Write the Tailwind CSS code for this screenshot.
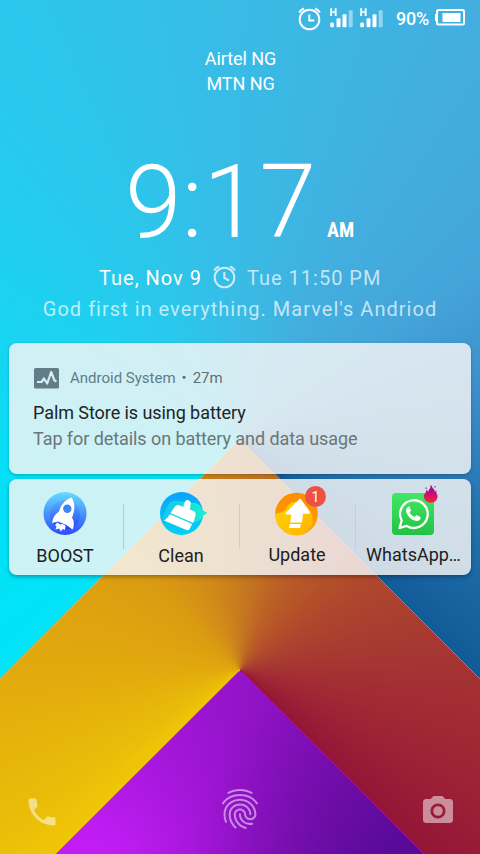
<!DOCTYPE html>
<html lang="en">
<head>
<meta charset="utf-8">
<title>Lock screen</title>
<script src="https://cdn.jsdelivr.net/npm/@tailwindcss/browser@4"></script>
</head>
<body class="w-[480px] h-[854px] overflow-hidden font-['Roboto',sans-serif]">
<div class="relative isolate w-[480px] h-[854px] overflow-hidden">
  <!-- wallpaper -->
  <div class="absolute inset-0 -z-10 bg-[conic-gradient(from_225deg_at_240px_438px,#00e4f8_0deg,#04e0f6_35deg,#1cd2f0_75deg,#2cc6eb_108deg,#39bbe6_135deg,#42aedf_165deg,#44a4da_190deg,#3b8cc8_215deg,#2676b2_240deg,#115b98_270deg,#115b98_315deg,#00e4f8_315deg)]"></div>
  <div class="absolute inset-0 -z-10 [clip-path:polygon(240px_439px,480px_679px,480px_854px,0_854px,0_679px)] bg-[conic-gradient(from_225deg_at_240px_670px,#f0c607_0deg,#e9bc09_12deg,#e2a90d_45deg,#da9b12_90deg,#cf8819_118deg,#c57820_138deg,#bb5f26_160deg,#af482d_190deg,#a63632_220deg,#9d2335_250deg,#941537_270deg,#941537_315deg,#f0c607_315deg)]"></div>
  <svg class="absolute inset-0 -z-10" width="480" height="854" viewBox="0 0 480 854" fill="none">
    <defs>
      <radialGradient id="glow" gradientUnits="userSpaceOnUse" cx="85" cy="865" r="215"><stop stop-color="#c41df7"/><stop offset=".2" stop-color="#c01df3" stop-opacity=".9"/><stop offset="1" stop-color="#9a14d2" stop-opacity="0"/></radialGradient>
      <radialGradient id="shade" gradientUnits="userSpaceOnUse" cx="420" cy="865" r="230"><stop stop-color="#540a94"/><stop offset=".2" stop-color="#580a98" stop-opacity=".88"/><stop offset="1" stop-color="#7a0eb0" stop-opacity="0"/></radialGradient>
      <linearGradient id="violet" gradientUnits="userSpaceOnUse" x1="140" y1="800" x2="340" y2="830"><stop stop-color="#a316d9"/><stop offset=".5" stop-color="#9113c6"/><stop offset="1" stop-color="#780eae"/></linearGradient>
    </defs>
    <path d="M0 679L240 439" stroke="#e9b860" stroke-opacity=".7"/>
    <path d="M240 439L480 679" stroke="#9e9c93" stroke-opacity=".7"/>
    <path id="peak" d="M56 854L238 672Q240 670 242 672L424 854Z" fill="url(#violet)"/>
    <path d="M56 854L238 672Q240 670 242 672L424 854Z" fill="url(#glow)"/>
    <path d="M56 854L238 672Q240 670 242 672L424 854Z" fill="url(#shade)"/>
    <path d="M242 672L424 854" stroke="#a4149c"/>
  </svg>

  <div class="flex h-full flex-col">
    <!-- status bar -->
    <div class="flex h-[38px] items-start text-white pt-[6px] pl-[297px]">
      <svg width="25" height="25" viewBox="0 0 25 25" fill="none" stroke="#fff" stroke-width="2"><circle cx="12.500" cy="13.500" r="9.800"/><path d="M12.300 8.500V14.500H17.300M2 6.500Q4 3.500 7 2.500M23 6.500Q21 3.500 18 2.500"/></svg>
      <svg class="ml-[8px]" width="54" height="24" viewBox="0 0 54 24" fill="#fff">
        <g id="sim"><path d="M.2 2.300H2.100V5.200H4.700V2.300H6.600V10H4.700V6.800H2.100V10H.2Z"/><rect x=".2" y="16.500" width="3.800" height="4.700" rx="1.200"/><rect x="6.500" y="12.300" width="4" height="9" rx="1"/><rect x="12.500" y="8.200" width="4" height="13" rx="1"/><rect x="18.700" y="4.200" width="4" height="17" rx="1" fill-opacity=".45"/></g>
        <use href="#sim" x="30"/>
      </svg>
      <span class="ml-[12px] w-[39px] text-[18px] leading-[26px] font-medium tracking-[-0.2px] whitespace-nowrap">90%</span>
      <svg width="30" height="20" viewBox="0 0 30 20"><path d="M3.500 4H27.500Q29 4 29 5.500V17Q29 18.500 27.500 18.500H3.500Q2 18.500 2 17V5.500Q2 4 3.500 4Z" fill="none" stroke="#fff" stroke-width="2"/><path d="M0 8H2V15H0ZM7.500 7H25.500V16H7.500Z" fill="#fff"/></svg>
    </div>

    <div class="pt-[8px] pl-px text-center text-[18px] leading-[25px] tracking-[-0.06px] text-white"><div>Airtel NG</div><div>MTN NG</div></div>

    <!-- clock -->
    <div class="mt-[45px] flex h-[122px] items-baseline pl-[125px] text-white">
      <span class="w-[202px] whitespace-nowrap text-[102px] leading-[122px] font-light">9:17</span>
      <span class="text-[20px] font-bold font-['Roboto_Condensed','Roboto',sans-serif]">AM</span>
    </div>
    <div class="flex h-[30px] items-center pl-[99px] text-[20px] tracking-[1px] whitespace-nowrap text-white">
      <span class="w-[113px]">Tue, Nov 9</span>
      <svg class="w-[25px] h-[25px] -mt-[3px] opacity-75" viewBox="0 0 25 25" fill="none" stroke="#fff" stroke-width="2"><circle cx="12.500" cy="13.500" r="9.800"/><path d="M12.300 8V14L17 16.500M2 6.500Q4 3.500 7 2.500M23 6.500Q21 3.500 18 2.500"/></svg>
      <span class="ml-[10px] text-white/70">Tue 11:50 PM</span>
    </div>
    <div class="h-[31px] pt-px text-center text-[20px] leading-[31px] tracking-[1.020px] whitespace-nowrap text-white/70">God first in everything. Marvel's Andriod</div>

    <!-- notification -->
    <div class="mx-[9px] mt-[19px] h-[131px] rounded-[8px] bg-[#f5f5f5]/83 px-[24px] pt-[22px] shadow-[0_1px_3px_rgba(0,0,0,0.25)]">
      <div class="flex h-[26px] items-center text-[15px] whitespace-nowrap text-[#607d86]">
        <svg class="mr-[11px]" width="26" height="21" viewBox="0 0 26 21"><rect x="1" y="0" width="25" height="20.500" rx="1.500" fill="#607d88"/><path d="M4 14H8.500L11 10.500L14.200 15.500L18.200 4L21.500 12.500L23.500 13.500" fill="none" stroke="#d6eef2" stroke-width="2.200" stroke-linejoin="round"/></svg>
        <span>Android System</span><span class="mx-[6px] text-[#5e6e72]">•</span><span class="text-[#5e6e72]">27m</span>
      </div>
      <div class="mt-[9px] text-[18px] leading-[26px] tracking-[-0.070px] text-[#1d2426]">Palm Store is using battery</div>
      <div class="text-[18px] leading-[26px] tracking-[-0.070px] text-[#6a7678]">Tap for details on battery and data usage</div>
    </div>

    <!-- shortcuts -->
    <div class="mx-[9px] mt-[5px] grid h-[96px] grid-cols-[115px_116px_116px_115px] rounded-[8px] bg-[#f5f5f5]/83 text-[18px] leading-[24px] text-[#1d2021] shadow-[0_2px_4px_rgba(0,0,0,0.3)]">
      <div class="relative flex flex-col items-center pt-[13px] pr-[3px]">
        <svg width="44" height="44" viewBox="0 0 44 44">
          <defs><linearGradient id="b1" x2="0" y2="1"><stop stop-color="#66dcff"/><stop offset="1" stop-color="#2a4cff"/></linearGradient><linearGradient id="b2" x2="0" y2="1"><stop stop-color="#58b4fb"/><stop offset="1" stop-color="#2340ff"/></linearGradient></defs>
          <circle cx="22" cy="21.500" r="21.500" fill="url(#b1)"/><circle cx="22" cy="23" r="15" fill="url(#b2)"/>
          <path d="M28.500 5.500C23 7.500 18 12 16 19.500C12 22 9.500 26 9 31L15 29.500L23.500 33L29.500 37.500Q32.500 31 29 25.500C32 19 32.500 11 28.500 5.500Z" fill="#fff"/>
          <circle cx="24.300" cy="16.800" r="4.200" fill="#3f82f5"/>
          <path d="M14.500 30.500L17 32.500L19.500 32L22.500 33.500L22 38L19.500 37L18 39.500L16 36.500L12.500 37.500L13.500 34.500L12 33Z" fill="#fff"/>
        </svg>
        <span class="mt-[8px]">BOOST</span><i class="absolute right-0 top-[25px] h-[45px] w-px bg-[#bcc9cc]"></i>
      </div>
      <div class="relative flex flex-col items-center pt-[13px] pr-[2px]">
        <svg class="overflow-visible" width="44" height="44" viewBox="0 0 44 44">
          <defs><linearGradient id="c1" x2="0" y2="1"><stop stop-color="#08a2ff"/><stop offset="1" stop-color="#04d2f3"/></linearGradient><linearGradient id="c2" x1="0" x2="1"><stop stop-color="#16c6ed"/><stop offset="1" stop-color="#19f2cf"/></linearGradient></defs>
          <circle cx="22.500" cy="21.500" r="21.500" fill="url(#c1)"/>
          <path d="M3 29Q4 23 9 13Q12 8 19 9L36 11Q42 12 43 18L48.500 21L43.500 24Q42 30 34 30Z" fill="url(#c2)"/>
          <path d="M26 9.500Q27.500 7.500 29.500 8.200Q32 9.500 31.700 11L31 17.500L35.500 19.500Q37.200 21 36.500 23.500L34.300 31L11.500 21L16 14.500Q17.500 12.300 20 13.200L24.200 15ZM11 22.300L33.300 32L30.500 37Q29.500 38.800 27.500 38L5 28.500Q9 26 11 22.300Z" fill="#fff"/>
        </svg>
        <span class="mt-[8px]">Clean</span><i class="absolute right-0 top-[25px] h-[45px] w-px bg-[#d2cbc6]"></i>
      </div>
      <div class="relative flex flex-col items-center pt-[13px] pr-[2px]">
        <div class="relative">
          <svg width="44" height="44" viewBox="0 0 44 44">
            <defs><linearGradient id="u1" x2="0" y2="1"><stop stop-color="#ff8b00"/><stop offset="1" stop-color="#ffa205"/></linearGradient><clipPath id="uc"><circle cx="21.500" cy="22" r="21.300"/></clipPath><linearGradient id="u2" x2="1" y2="1"><stop stop-color="#ffd600"/><stop offset="1" stop-color="#ffb300"/></linearGradient></defs>
            <circle cx="21.500" cy="22" r="21.300" fill="url(#u1)"/>
            <g clip-path="url(#uc)"><path d="M0 22Q11 21 13 13Q21 6 31 14Q40 22 37 33Q31 45 18 44Q1 40 0 22Z" fill="url(#u2)"/></g>
            <path d="M24.500 7Q25.500 6.300 26.200 7.500L34.800 19.800Q35.300 21.500 33.500 21.800H28L27 30.500H15.200L16.300 22.500H12Q10 22 11 20.500ZM14.800 32H26L25 36H14Z" fill="#fff"/>
          </svg>
          <span class="absolute left-[30px] -top-[6px] flex h-[21px] w-[21px] items-center justify-center rounded-full bg-[#ed5144] text-[14px] text-white">1</span>
        </div>
        <span class="mt-[7px]">Update</span><i class="absolute right-0 top-[25px] h-[45px] w-px bg-[#c6ccd4]"></i>
      </div>
      <div class="relative flex flex-col items-center pt-[13px]">
        <div class="relative mr-[2px]">
          <svg width="44" height="44" viewBox="0 0 44 44">
            <defs><linearGradient id="w1" x2="0" y2="1"><stop stop-color="#42e864"/><stop offset="1" stop-color="#22c244"/></linearGradient></defs>
            <rect x="1" y="1" width="42" height="42" rx="4" fill="url(#w1)"/>
            <path d="M8.500 36L10.700 28.500A13.800 13.800 0 1 1 15.800 33.900Z" fill="none" stroke="#fff" stroke-width="2.300" stroke-linejoin="round"/>
            <path d="M17.500 14.500Q15 16 15 19Q16 24 21 27.500Q26 30 28.500 28Q30 26.500 29.500 25L25.500 23L23.500 25Q20 23.500 18.500 20.500L20 18.500L18.500 14.500Z" fill="#fff"/>
          </svg>
          <svg class="absolute left-[32px] -top-[7px]" width="16" height="19" viewBox="0 0 16 19"><defs><linearGradient id="f1" x2="0" y2="1"><stop stop-color="#8a0c96"/><stop offset=".5" stop-color="#c41173"/><stop offset="1" stop-color="#ff2435"/></linearGradient></defs><path d="M7.500 0Q8 3 6 4.500Q5.500 5.500 5.500 6.500Q4 6 3.500 4.500Q3.500 6.500 2 8.500Q0 11 1.500 14A7 7 0 0 0 14.500 12.500Q15 10 13.500 8.500Q13 7 13.500 5.500Q12 6 11.500 7Q12 4 9.500 3Q9.500 1 7.500 0ZM2.500 2.500H3.800V3.800H2.500ZM11.500 1H12.500V2.500H11.500Z" fill="url(#f1)"/></svg>
        </div>
        <span class="mt-[7px] whitespace-nowrap">WhatsApp…</span>
      </div>
    </div>

    <!-- bottom actions -->
    <div class="mt-auto mb-[21px] flex items-center justify-between pl-[24px] pr-[24px] text-white/50">
      <svg class="mt-[6px]" width="36" height="36" viewBox="0 0 24 24" fill="currentColor"><path d="M6.620 10.790c1.440 2.830 3.760 5.140 6.590 6.590l2.200-2.200c.27-.27.67-.36 1.020-.24 1.120.37 2.330.57 3.570.57.55 0 1 .45 1 1V20c0 .55-.45 1-1 1-9.390 0-17-7.610-17-17 0-.55.45-1 1-1h3.500c.55 0 1 .45 1 1 0 1.250.2 2.450.57 3.570.11.35.03.74-.25 1.020l-2.200 2.200z"/></svg>
      <svg width="48" height="48" viewBox="0 0 24 24" fill="currentColor"><path d="M17.810 4.470c-.08 0-.16-.02-.23-.06C15.660 3.420 14 3 12.010 3c-1.980 0-3.860.47-5.570 1.410-.24.13-.54.04-.68-.2-.13-.24-.04-.55.2-.68C7.820 2.520 9.860 2 12.010 2c2.130 0 3.990.47 6.030 1.520.25.13.34.43.21.67-.09.18-.26.28-.44.28zM3.500 9.720c-.1 0-.2-.03-.29-.09-.23-.16-.28-.47-.12-.7.99-1.400 2.250-2.500 3.750-3.270C9.980 4.040 14 4.030 17.150 5.650c1.500.77 2.760 1.860 3.750 3.250.16.22.11.54-.12.7-.23.16-.54.11-.7-.12-.9-1.260-2.040-2.250-3.390-2.940-2.870-1.470-6.540-1.470-9.400.01-1.360.7-2.500 1.700-3.400 2.960-.08.14-.23.21-.39.21zm6.250 12.070c-.13 0-.26-.05-.35-.15-.87-.87-1.340-1.430-2.010-2.640-.69-1.230-1.050-2.730-1.050-4.340 0-2.970 2.540-5.390 5.660-5.390s5.660 2.420 5.660 5.390c0 .28-.22.5-.5.5s-.5-.22-.5-.5c0-2.420-2.090-4.390-4.660-4.390-2.570 0-4.660 1.970-4.660 4.390 0 1.440.32 2.770.93 3.850.64 1.150 1.080 1.640 1.850 2.420.19.2.19.51 0 .71-.11.1-.24.15-.37.15zm7.170-1.850c-1.190 0-2.240-.3-3.100-.89-1.490-1.010-2.380-2.650-2.380-4.390 0-.28.22-.5.5-.5s.5.22.5.5c0 1.410.72 2.740 1.940 3.560.71.48 1.540.71 2.540.71.24 0 .64-.03 1.040-.1.27-.05.53.13.58.41.05.27-.13.53-.41.58-.57.11-1.070.12-1.210.12zM14.910 22c-.04 0-.09-.01-.13-.02-1.590-.44-2.630-1.030-3.720-2.100-1.400-1.390-2.170-3.240-2.170-5.220 0-1.620 1.380-2.940 3.080-2.940 1.700 0 3.080 1.320 3.080 2.940 0 1.070.93 1.940 2.080 1.940s2.080-.87 2.080-1.940c0-3.770-3.250-6.830-7.250-6.830-2.840 0-5.440 1.580-6.610 4.030-.39.81-.59 1.760-.59 2.800 0 .78.07 2.010.67 3.610.1.260-.03.55-.29.64-.26.1-.55-.04-.64-.29-.49-1.310-.73-2.610-.73-3.960 0-1.200.23-2.290.68-3.240 1.330-2.790 4.280-4.600 7.510-4.600 4.550 0 8.250 3.510 8.250 7.830 0 1.620-1.380 2.940-3.080 2.940s-3.080-1.320-3.080-2.940c0-1.070-.93-1.940-2.080-1.940s-2.080.87-2.080 1.940c0 1.710.66 3.310 1.870 4.510.95.94 1.860 1.460 3.270 1.850.27.07.42.35.35.61-.05.23-.26.38-.47.38z"/></svg>
      <svg class="mt-[4px]" width="36" height="36" viewBox="0 0 24 24" fill="currentColor"><circle cx="12" cy="12" r="3.200"/><path d="M9 2L7.170 4H4c-1.100 0-2 .9-2 2v12c0 1.100.9 2 2 2h16c1.100 0 2-.9 2-2V6c0-1.100-.9-2-2-2h-3.170L15 2H9zm3 15c-2.760 0-5-2.240-5-5s2.240-5 5-5 5 2.240 5 5-2.240 5-5 5z"/></svg>
    </div>
  </div>
</div>
</body>
</html>
